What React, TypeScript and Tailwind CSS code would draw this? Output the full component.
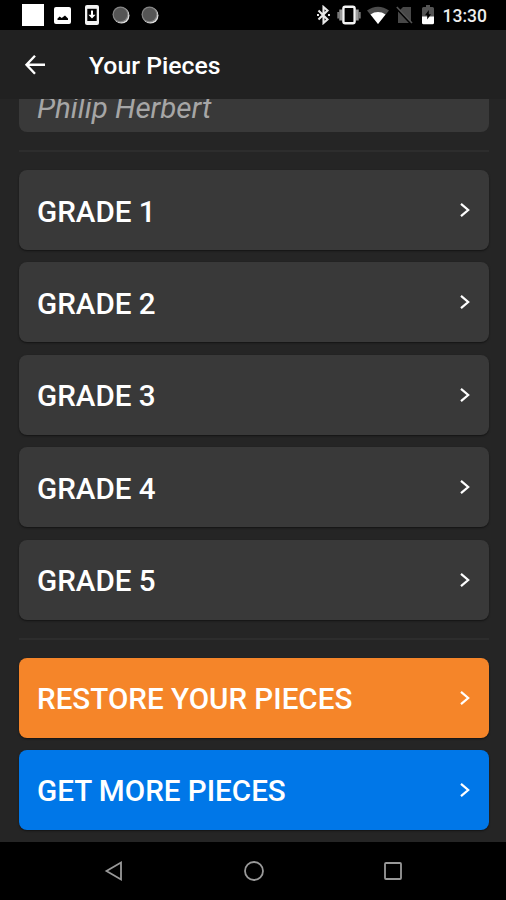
import clsx from "clsx";

const grades = ["GRADE 1", "GRADE 2", "GRADE 3", "GRADE 4", "GRADE 5"];

function StatusBar() {
  return (
    <div className="flex h-[30px] shrink-0 items-center bg-black">
      <div className="ml-[21.5px] h-[22px] w-[22px] bg-white" />
      {/* picture */}
      <svg className="ml-[10.5px]" width="17" height="17" viewBox="0 0 17 17">
        <rect width="17" height="17" rx="2" fill="#fff" />
        <path d="M3.500 13v-1.500l2.200-2 2 1.500L11 8.500l3 3V13z" fill="#000" />
      </svg>
      {/* download to device */}
      <svg className="ml-[14px]" width="14" height="20" viewBox="0 0 14 20">
        <rect width="14" height="20" rx="2" fill="#f2f2f2" />
        <rect x="2.3" y="3.8" width="9.4" height="12.2" fill="#000" />
        <path d="M6 5.500h2v4.200h2.600L7 13.600 3.400 9.700H6z" fill="#fff" />
      </svg>
      <Dot className="ml-[13px]" />
      <Dot className="ml-[11px]" />

      {/* bluetooth */}
      <svg
        className="ml-auto"
        width="13"
        height="20"
        viewBox="0 0 13 20"
        fill="none"
        stroke="#e8e8e8"
        strokeWidth="2.1"
      >
        <path d="M1.500 5.500l9 9L6.500 18V2l4 3.500-9 9" />
        <path d="M0 10h2M11 10h2" />
      </svg>
      {/* vibrate */}
      <svg className="ml-[7px]" width="24" height="20" viewBox="0 0 24 20">
        <path d="M1.300 7v6.500M22.700 7v6.500" stroke="#777" strokeWidth="2" />
        <path d="M3.800 4.500v11M20.200 4.500v11" stroke="#9a9a9a" strokeWidth="3" />
        <rect
          x="6.4"
          y="1.8"
          width="11.2"
          height="16.4"
          rx="1.8"
          fill="none"
          stroke="#f4f4f4"
          strokeWidth="2.4"
        />
      </svg>
      {/* wifi */}
      <svg className="ml-[6px]" width="22" height="18" viewBox="0 0 22 18">
        <path d="M0 4.600C6.500-.6 15.500-.6 22 4.600L11 18z" fill="#4c4c4c" />
        <path d="M3.500 8.500C8 5.200 14 5.200 18.500 8.500L11 18z" fill="#fff" />
      </svg>
      {/* no sim */}
      <svg className="ml-[7px]" width="17" height="18" viewBox="0 0 17 18">
        <path d="M7 1h8v16H2V6z" fill="#484848" />
        <path d="M0 1.600L15.500 18" stroke="#000" strokeWidth="2.400" />
        <path d="M.8 1L16 17" stroke="#555" strokeWidth="1.600" />
      </svg>
      {/* battery */}
      <svg className="ml-[9px]" width="12" height="20" viewBox="0 0 12 20">
        <path
          d="M4 0h4v2h2.500Q12 2 12 3.500V12H0V3.500Q0 2 1.500 2H4z"
          fill="#555"
        />
        <path d="M0 11.500h12v6.200q0 1.500-1.500 1.500h-9Q0 19.200 0 17.700z" fill="#fff" />
        <path d="M6.800 5v4.300h2.200L5.200 14.500v-4.300H3z" fill="#000" />
      </svg>
      <span className="mt-[2px] mr-[18.5px] ml-[9px] w-[45px] text-[17.500px] leading-[30px] font-medium whitespace-nowrap text-[#eee]">
        13:30
      </span>
    </div>
  );
}

function Dot({ className }: { className?: string }) {
  return (
    <svg className={className} width="18" height="18" viewBox="0 0 18 18">
      <circle cx="9.500" cy="9.500" r="8" fill="#e0e0e0" />
      <circle cx="8.500" cy="8.500" r="8" fill="#858585" />
      <circle cx="8.500" cy="8.500" r="6.800" fill="#555" />
    </svg>
  );
}

function Row({ label, color = "bg-[#393939]" }: { label: string; color?: string }) {
  return (
    <button
      className={clsx(
        "flex h-20 w-full shrink-0 items-center justify-between rounded-[8px] pr-[18px] pl-[18.5px] shadow-[0_1px_2px_rgba(0,0,0,0.5)]",
        color
      )}
    >
      <span className="mt-[3px] text-[29.6px] leading-[34px] font-medium whitespace-nowrap text-white">
        {label}
      </span>
      <svg width="12" height="16" viewBox="0 0 12 16" fill="none">
        <path d="M2 1.800L9.200 8 2 14.200" stroke="#fff" strokeWidth="2.200" />
      </svg>
    </button>
  );
}

function Divider() {
  return <hr className="mt-[18px] mb-[18px] h-[2px] border-0 bg-[#2d2d2d]" />;
}

function NavBar() {
  return (
    <div className="flex h-[58px] shrink-0 items-center justify-between bg-black pr-[103px] pl-[104px]">
      <svg width="20" height="22" viewBox="0 0 20 22" fill="none">
        <path d="M17 2.500v17L2.500 11z" stroke="#999" strokeWidth="1.800" />
      </svg>
      <svg width="22" height="22" viewBox="0 0 22 22" fill="none">
        <circle cx="11" cy="11" r="9" stroke="#999" strokeWidth="1.800" />
      </svg>
      <svg width="20" height="22" viewBox="0 0 20 22" fill="none">
        <rect x="2" y="3" width="16" height="16" rx="1" stroke="#999" strokeWidth="1.800" />
      </svg>
    </div>
  );
}

export default function App() {
  return (
    <div className="flex h-[900px] w-[506px] flex-col overflow-hidden bg-[#252525] font-['Roboto',sans-serif]">
      <StatusBar />
      <header className="flex h-[69px] shrink-0 items-center bg-[#212121] pl-[24px]">
        <svg width="22" height="22" viewBox="0 0 22 22" fill="none">
          <path
            d="M11 1.800L2.500 10.800l8.500 9M2.500 10.800H21"
            stroke="#fff"
            strokeWidth="2.400"
          />
        </svg>
        <h1 className="mt-[3px] ml-[43px] text-[24.800px] leading-[28px] font-medium text-white">
          Your Pieces
        </h1>
      </header>
      <main className="flex-1 overflow-hidden pr-[17.5px] pl-[18.5px]">
        {/* bottom edge of the piece scrolled under the header */}
        <div className="flex h-[33px] items-end overflow-hidden rounded-b-[8px] bg-[#393939] pl-[18.5px]">
          <span className="mb-[6px] text-[29.5px] leading-[36px] whitespace-nowrap text-[#a6a6a6] italic">
            Philip Herbert
          </span>
        </div>
        <Divider />
        <div className="flex flex-col gap-[12.400px]">
          {grades.map((grade) => (
            <Row key={grade} label={grade} />
          ))}
        </div>
        <Divider />
        <div className="flex flex-col gap-[12.400px]">
          <Row label="RESTORE YOUR PIECES" color="bg-[#f58529]" />
          <Row label="GET MORE PIECES" color="bg-[#0077e8]" />
        </div>
      </main>
      <NavBar />
    </div>
  );
}
